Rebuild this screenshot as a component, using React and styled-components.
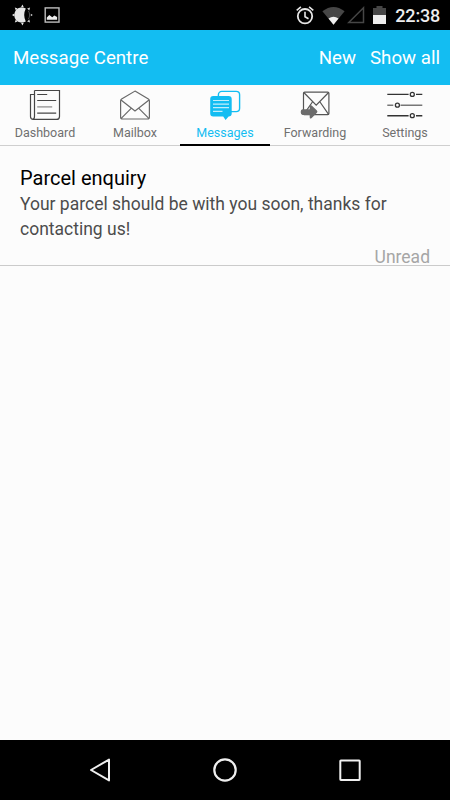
import React from "react";
import styled, { createGlobalStyle } from "styled-components";

const GlobalStyle = createGlobalStyle`
  * { box-sizing: border-box; }
  body { margin: 0; background: #fcfcfc; font-family: Roboto, sans-serif; }
`;

const Screen = styled.div`
  width: 450px;
  height: 800px;
  display: flex;
  flex-direction: column;
  background: #fcfcfc;
  overflow: hidden;
`;

const StatusBar = styled.header`
  height: 30px;
  flex: none;
  display: flex;
  align-items: center;
  justify-content: space-between;
  padding: 0 10px;
  background: #000;
  color: #ededed;
`;

const StatusGroup = styled.div`
  display: flex;
  align-items: center;
  gap: ${(p) => p.$gap}px;
`;

const Clock = styled.time`
  font-size: 18px;
  font-weight: 500;
  line-height: 30px;
  letter-spacing: -0.2px;
  margin: 2px 0 0 4px;
`;

const AppBar = styled.div`
  height: 55px;
  flex: none;
  display: flex;
  align-items: center;
  justify-content: space-between;
  padding: 0 10px 0 13px;
  background: #13bdf2;
  color: #fff;
  font-size: 18.7px;
  line-height: 24px;
`;

const Title = styled.h1`
  margin: 0;
  font: inherit;
`;

const Actions = styled.div`
  display: flex;
  gap: 14px;
`;

const Action = styled.button`
  border: 0;
  padding: 0;
  background: none;
  color: inherit;
  font: inherit;
`;

const Tabs = styled.nav`
  display: grid;
  grid-template-columns: repeat(5, 1fr);
  height: 61px;
  flex: none;
`;

const Tab = styled.button`
  display: flex;
  flex-direction: column;
  align-items: center;
  padding: 4px 0 0;
  border: 0;
  border-bottom: ${(p) => (p.$active ? "2px solid #000" : "1px solid #cfcfcf")};
  background: none;
  font-family: inherit;
  color: ${(p) => (p.$active ? "#13bdf2" : "#707070")};
`;

const TabLabel = styled.span`
  margin-top: 2px;
  font-size: 12.5px;
  line-height: 16px;
`;

const Message = styled.article`
  height: 120px;
  flex: none;
  display: flex;
  flex-direction: column;
  padding: 19px 20px 0;
  border-bottom: 1px solid #cbcbcb;
`;

const Subject = styled.h2`
  margin: 0;
  font-size: 20px;
  font-weight: 400;
  line-height: 26px;
  color: #000;
`;

const Body = styled.p`
  margin: 1px 0 0;
  font-size: 17.5px;
  line-height: 25px;
  color: #4c4c4c;
`;

const Flag = styled.span`
  align-self: flex-end;
  margin-top: 5px;
  font-size: 17.5px;
  line-height: 20px;
  color: #a6a6a6;
`;

const NavBar = styled.footer`
  height: 60px;
  flex: none;
  margin-top: auto;
  display: flex;
  align-items: center;
  justify-content: space-between;
  padding: 0 85px;
  background: #000;
`;

const Line = styled.svg`
  display: block;
  flex: none;
  fill: none;
  stroke: ${(p) => p.$color || "currentColor"};
  stroke-width: ${(p) => p.$weight || 1.2};
`;

const Brightness = () => (
  <Line width="24" height="22" viewBox="10 4 24 22" $color="none">
    <path d="M25.8 8.5A7.6 7.6 0 1 0 25.8 21.5Q22.6 15 25.8 8.5Z" fill="#e6e6e6" />
    <path d="M21 7.2l1.4-2.7 1.4 2.7zM21 22.8l1.4 2.7 1.4-2.7zM14.4 13.6L12 15l2.4 1.4zM14.8 7.6l2.8 1-1.8 1.8zM14.8 22.4l2.8-1-1.8-1.8z" fill="#e6e6e6" />
    <path d="M30.8 13.8l2 1.2-2 1.2zM30.1 7.5l-.8 3-2.2-2zM30.1 22.5l-.8-3-2.2 2z" fill="#cfcfcf" />
    <path d="M28.4 10.8Q29.6 12.8 29.6 15T28.4 19.2" stroke="#555" strokeWidth=".9" />
  </Line>
);

const Picture = () => (
  <Line width="16" height="16" viewBox="0 0 16 16" $color="#bdbdbd">
    <rect x="1.2" y=".9" width="13.8" height="14.2" strokeWidth="1.4" />
    <path d="M2.8 12.7V10.6L5.3 8l3 2.3 2-1.8 2.8 1.6v2.6z" fill="#ededed" stroke="none" />
  </Line>
);

const AlarmSvg = styled(Line)`
  margin-right: 3px;
`;

const Alarm = () => (
  <AlarmSvg width="18" height="20" viewBox="0 0 18 20" $color="#e6e6e6" $weight="1.8">
    <circle cx="9" cy="11.2" r="7.2" />
    <path d="M9 6.7v5l3.5 2.1M.7 5.3l4.2-3.5M17.3 5.3l-4.2-3.5" strokeWidth="1.6" />
  </AlarmSvg>
);

const Wifi = () => (
  <Line width="23" height="19" viewBox="0 0 23 19" $color="none">
    <path d="M.4 5.2Q11.5-3.4 22.6 5.2L11.5 18.7Z" fill="#464646" />
    <path d="M6.5 12.5Q11.5 9 16.5 12.5L11.5 18.7Z" fill="#f0f0f0" />
  </Line>
);

const SignalSvg = styled(Line)`
  margin: 0 3px 0 -3px;
`;

const Signal = () => (
  <SignalSvg width="18" height="18" viewBox="0 0 18 18" $color="#464646" $weight="1.5">
    <path d="M1.7 16.5H16.5V1.8Z" />
  </SignalSvg>
);

const Battery = () => (
  <Line width="13" height="18" viewBox="0 0 13 18" $color="none">
    <path d="M0 2h3.5V0h6v2H13v7H0Z" fill="#464646" />
    <path d="M0 9h13v9H0Z" fill="#ededed" />
  </Line>
);

const tabSvg = { width: 40, height: 34, viewBox: "0 0 40 34" };

const DashboardIcon = () => (
  <Line {...tabSvg} $color="#464646">
    <path d="M9.5 1.5H34.5V27.4Q34.5 30.4 31.5 30.4H8.2Q5.5 30.4 5.5 27.6V5.5H9.5M9.5 1.5V27.3Q9.5 30.3 7.6 30.4" />
    <path d="M12.2 5.5h10M12.2 11.5h19M12.2 24.2h19" />
    <path d="M12.2 17.9h15" stroke="#888" />
  </Line>
);

const MailboxIcon = () => (
  <Line {...tabSvg} $color="#686868">
    <path d="M20 2.1L33.4 10.1Q34.4 10.7 34.4 12V28Q34.4 30 32.4 30H7.6Q5.6 30 5.6 28V12Q5.6 10.7 6.6 10.1Z" />
    <path d="M6 11L20 22 34 11M6.2 29.4L16.4 19.2M33.8 29.4L23.6 19.2" />
  </Line>
);

const MessagesIcon = () => (
  <Line {...tabSvg} $color="#13bdf2" $weight="1.4">
    <rect x="13.4" y="2.4" width="21.2" height="20.2" rx="3.4" />
    <path d="M8.2 7H23.6Q26.7 7 26.7 10V24.4Q26.7 27.4 23.6 27.4L20.6 31 18.2 27.4H8.2Q5.2 27.4 5.2 24.4V10Q5.2 7 8.2 7Z" fill="#13bdf2" stroke="none" />
    <path d="M8 11.5h16M8 15.1h16M8 18.7h16M8 22.4h9.5" stroke="#c4eefb" strokeWidth="1.2" />
  </Line>
);

const ForwardingIcon = () => (
  <Line {...tabSvg} $color="#555">
    <rect x="8.5" y="3.1" width="25.4" height="22.6" rx="1.2" />
    <path d="M8.8 3.5L21.2 16.2 33.6 3.5M33.6 25.3L25 13M8.8 25.3L17.4 13" />
    <path d="M7 19.8H14.2V17Q14.2 14.5 16.2 16.1L21.2 20.7Q22.8 22.1 21.2 23.6L16.2 28.5Q14.2 30 14.2 27.7V25.4H7Q5.2 25.4 5.2 22.6 5.2 19.8 7 19.8Z" transform="translate(.5 .5)" fill="#6c6c6c" stroke="none" />
  </Line>
);

const SettingsIcon = () => (
  <Line {...tabSvg} $color="#333" $weight="1.4">
    <path d="M2.3 5.4H23.6M31 5.4h6.3M2.3 26.7H23.6M31 26.7h6.3" />
    <path d="M2.3 16.2h6M15.5 16.2h21.8" stroke="#777" />
    <g strokeWidth="1.3">
      <circle cx="27.3" cy="5.4" r="2" />
      <circle cx="12.4" cy="16.2" r="2" />
      <circle cx="27.3" cy="26.7" r="2" />
    </g>
  </Line>
);

const tabs = [
  { label: "Dashboard", Icon: DashboardIcon },
  { label: "Mailbox", Icon: MailboxIcon },
  { label: "Messages", Icon: MessagesIcon, active: true },
  { label: "Forwarding", Icon: ForwardingIcon },
  { label: "Settings", Icon: SettingsIcon },
];

export default function App() {
  return (
    <>
      <GlobalStyle />
      <Screen>
        <StatusBar>
          <StatusGroup $gap={10}>
            <Brightness />
            <Picture />
          </StatusGroup>
          <StatusGroup $gap={5}>
            <Alarm />
            <Wifi />
            <Signal />
            <Battery />
            <Clock>22:38</Clock>
          </StatusGroup>
        </StatusBar>
        <AppBar>
          <Title>Message Centre</Title>
          <Actions>
            <Action>New</Action>
            <Action>Show all</Action>
          </Actions>
        </AppBar>
        <Tabs>
          {tabs.map(({ label, Icon, active }) => (
            <Tab key={label} $active={active}>
              <Icon />
              <TabLabel>{label}</TabLabel>
            </Tab>
          ))}
        </Tabs>
        <Message>
          <Subject>Parcel enquiry</Subject>
          <Body>Your parcel should be with you soon, thanks for contacting us!</Body>
          <Flag>Unread</Flag>
        </Message>
        <NavBar>
          <Line width="30" height="30" viewBox="0 0 30 30" $color="#efefef" $weight="2">
            <path d="M6 15L24 4.6V25.4Z" strokeLinejoin="round" />
          </Line>
          <Line width="30" height="30" viewBox="0 0 30 30" $color="#efefef" $weight="2.2">
            <circle cx="15" cy="15" r="10.7" />
          </Line>
          <Line width="30" height="30" viewBox="0 0 30 30" $color="#efefef" $weight="2">
            <rect x="5.3" y="5.5" width="19.4" height="19.4" rx=".6" />
          </Line>
        </NavBar>
      </Screen>
    </>
  );
}
